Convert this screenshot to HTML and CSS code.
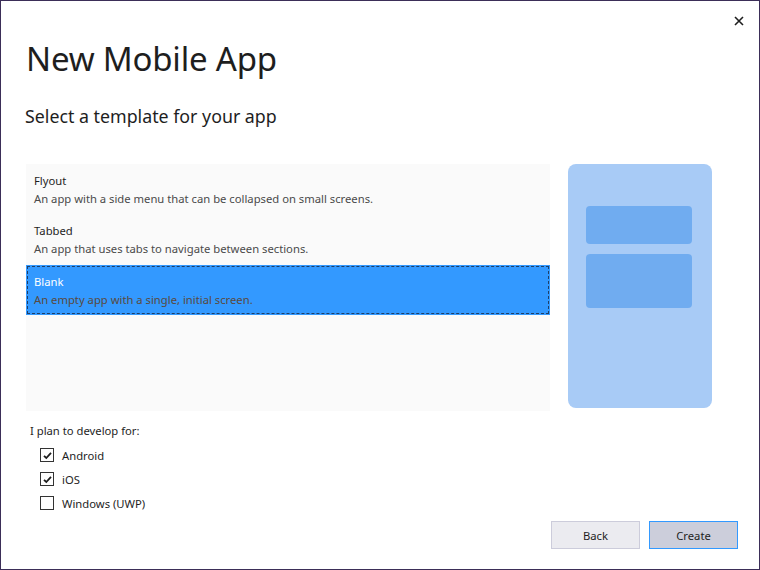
FILE: index.html
```html
<!DOCTYPE html>
<html>
<head>
<meta charset="utf-8">
<link rel="stylesheet" href="styles.css">
</head>
<body>
<div class="window">
  <button class="close" aria-label="Close">
    <svg width="10" height="10" viewBox="0 0 10 10"><path d="M1 1 L9 9 M9 1 L1 9" stroke="#1e1e1e" stroke-width="1.6"/></svg>
  </button>
  <h1 class="title">New Mobile App</h1>
  <h2 class="subtitle">Select a template for your app</h2>
  <div class="main">
    <div class="list">
      <div class="item">
        <div class="item-name">Flyout</div>
        <div class="item-desc">An app with a side menu that can be collapsed on small screens.</div>
      </div>
      <div class="item">
        <div class="item-name">Tabbed</div>
        <div class="item-desc">An app that uses tabs to navigate between sections.</div>
      </div>
      <div class="item selected">
        <div class="item-name">Blank</div>
        <div class="item-desc">An empty app with a single, initial screen.</div>
      </div>
    </div>
    <div class="preview-col">
      <div class="phone">
        <div class="block block-a"></div>
        <div class="block block-b"></div>
      </div>
    </div>
  </div>
  <div class="platforms">
    <div class="plan-label">I plan to develop for:</div>
    <label class="check"><span class="box checked"><svg width="11" height="11" viewBox="0 0 11 11"><path d="M2 5.8 L4.3 8 L9 2.8" fill="none" stroke="#1e1e1e" stroke-width="1.8"/></svg></span>Android</label>
    <label class="check"><span class="box checked"><svg width="11" height="11" viewBox="0 0 11 11"><path d="M2 5.8 L4.3 8 L9 2.8" fill="none" stroke="#1e1e1e" stroke-width="1.8"/></svg></span>iOS</label>
    <label class="check"><span class="box"></span>Windows (UWP)</label>
  </div>
  <div class="footer">
    <button class="btn">Back</button>
    <button class="btn primary">Create</button>
  </div>
</div>
</body>
</html>
```

FILE: styles.css
```css
html, body {
  margin: 0;
  padding: 0;
}
body {
  width: 760px;
  height: 570px;
  font-family: "Noto Sans", "Open Sans", sans-serif;
  color: #1e1e1e;
}
.window {
  position: relative;
  box-sizing: border-box;
  width: 760px;
  height: 570px;
  border: 1px solid #3b2e58;
  background: #ffffff;
  padding: 0 21px 0 25px;
  display: flex;
  flex-direction: column;
}
.close {
  position: absolute;
  top: 14px;
  right: 14px;
  width: 12px;
  height: 12px;
  padding: 0;
  border: 0;
  background: none;
  display: flex;
  align-items: center;
  justify-content: center;
}
.title {
  margin: 34px 0 0 0;
  font-size: 33px;
  font-weight: 400;
  line-height: 48px;
  letter-spacing: -0.2px;
}
.subtitle {
  margin: 20px 0 0 -1px;
  font-size: 17.8px;
  font-weight: 400;
  line-height: 26px;
}
.main {
  margin-top: 35px;
  display: flex;
  gap: 18px;
}
.list {
  width: 524px;
  height: 247px;
  background: #fafafa;
  display: flex;
  flex-direction: column;
}
.item {
  box-sizing: border-box;
  height: 50px;
  padding: 8px 8px 0 8px;
  font-size: 11.25px;
  line-height: 18px;
}
.item.selected {
  margin-top: 1px;
  background: #3399ff;
  outline: 1px dashed #1f3f66;
  outline-offset: -2px;
}
.item-name {
  color: #1e1e1e;
}
.item-desc {
  color: #4a4a4a;
}
.selected .item-name {
  color: #ffffff;
}
.selected .item-desc {
  color: #5a4a3e;
}
.preview-col {
  display: flex;
}
.phone {
  width: 144px;
  height: 244px;
  background: #a8cbf6;
  border-radius: 8px;
  box-sizing: border-box;
  padding: 42px 20px 0 18px;
  display: flex;
  flex-direction: column;
  gap: 10px;
}
.block {
  background: #70acf0;
  border-radius: 4px;
}
.block-a { height: 38px; }
.block-b { height: 54px; }
.platforms {
  margin-top: 11px;
  padding-left: 4px;
  font-size: 11.25px;
  display: flex;
  flex-direction: column;
}
.plan-label {
  line-height: 18px;
  margin-bottom: 3px;
}
.check {
  display: flex;
  align-items: center;
  height: 24px;
  padding-left: 10px;
  gap: 8px;
}
.box {
  box-sizing: border-box;
  width: 14px;
  height: 14px;
  border: 1px solid #333333;
  background: #ffffff;
  display: flex;
  align-items: center;
  justify-content: center;
}
.footer {
  margin-top: 6px;
  display: flex;
  justify-content: flex-end;
  gap: 9px;
}
.btn {
  box-sizing: border-box;
  width: 89px;
  height: 28px;
  font-family: "Noto Sans", "Open Sans", sans-serif;
  font-size: 11.25px;
  color: #1e1e1e;
  background: #ebebf0;
  border: 1px solid #ccccdb;
  padding: 0;
}
.btn.primary {
  background: #cccedb;
  border-color: #3399ff;
}
```
